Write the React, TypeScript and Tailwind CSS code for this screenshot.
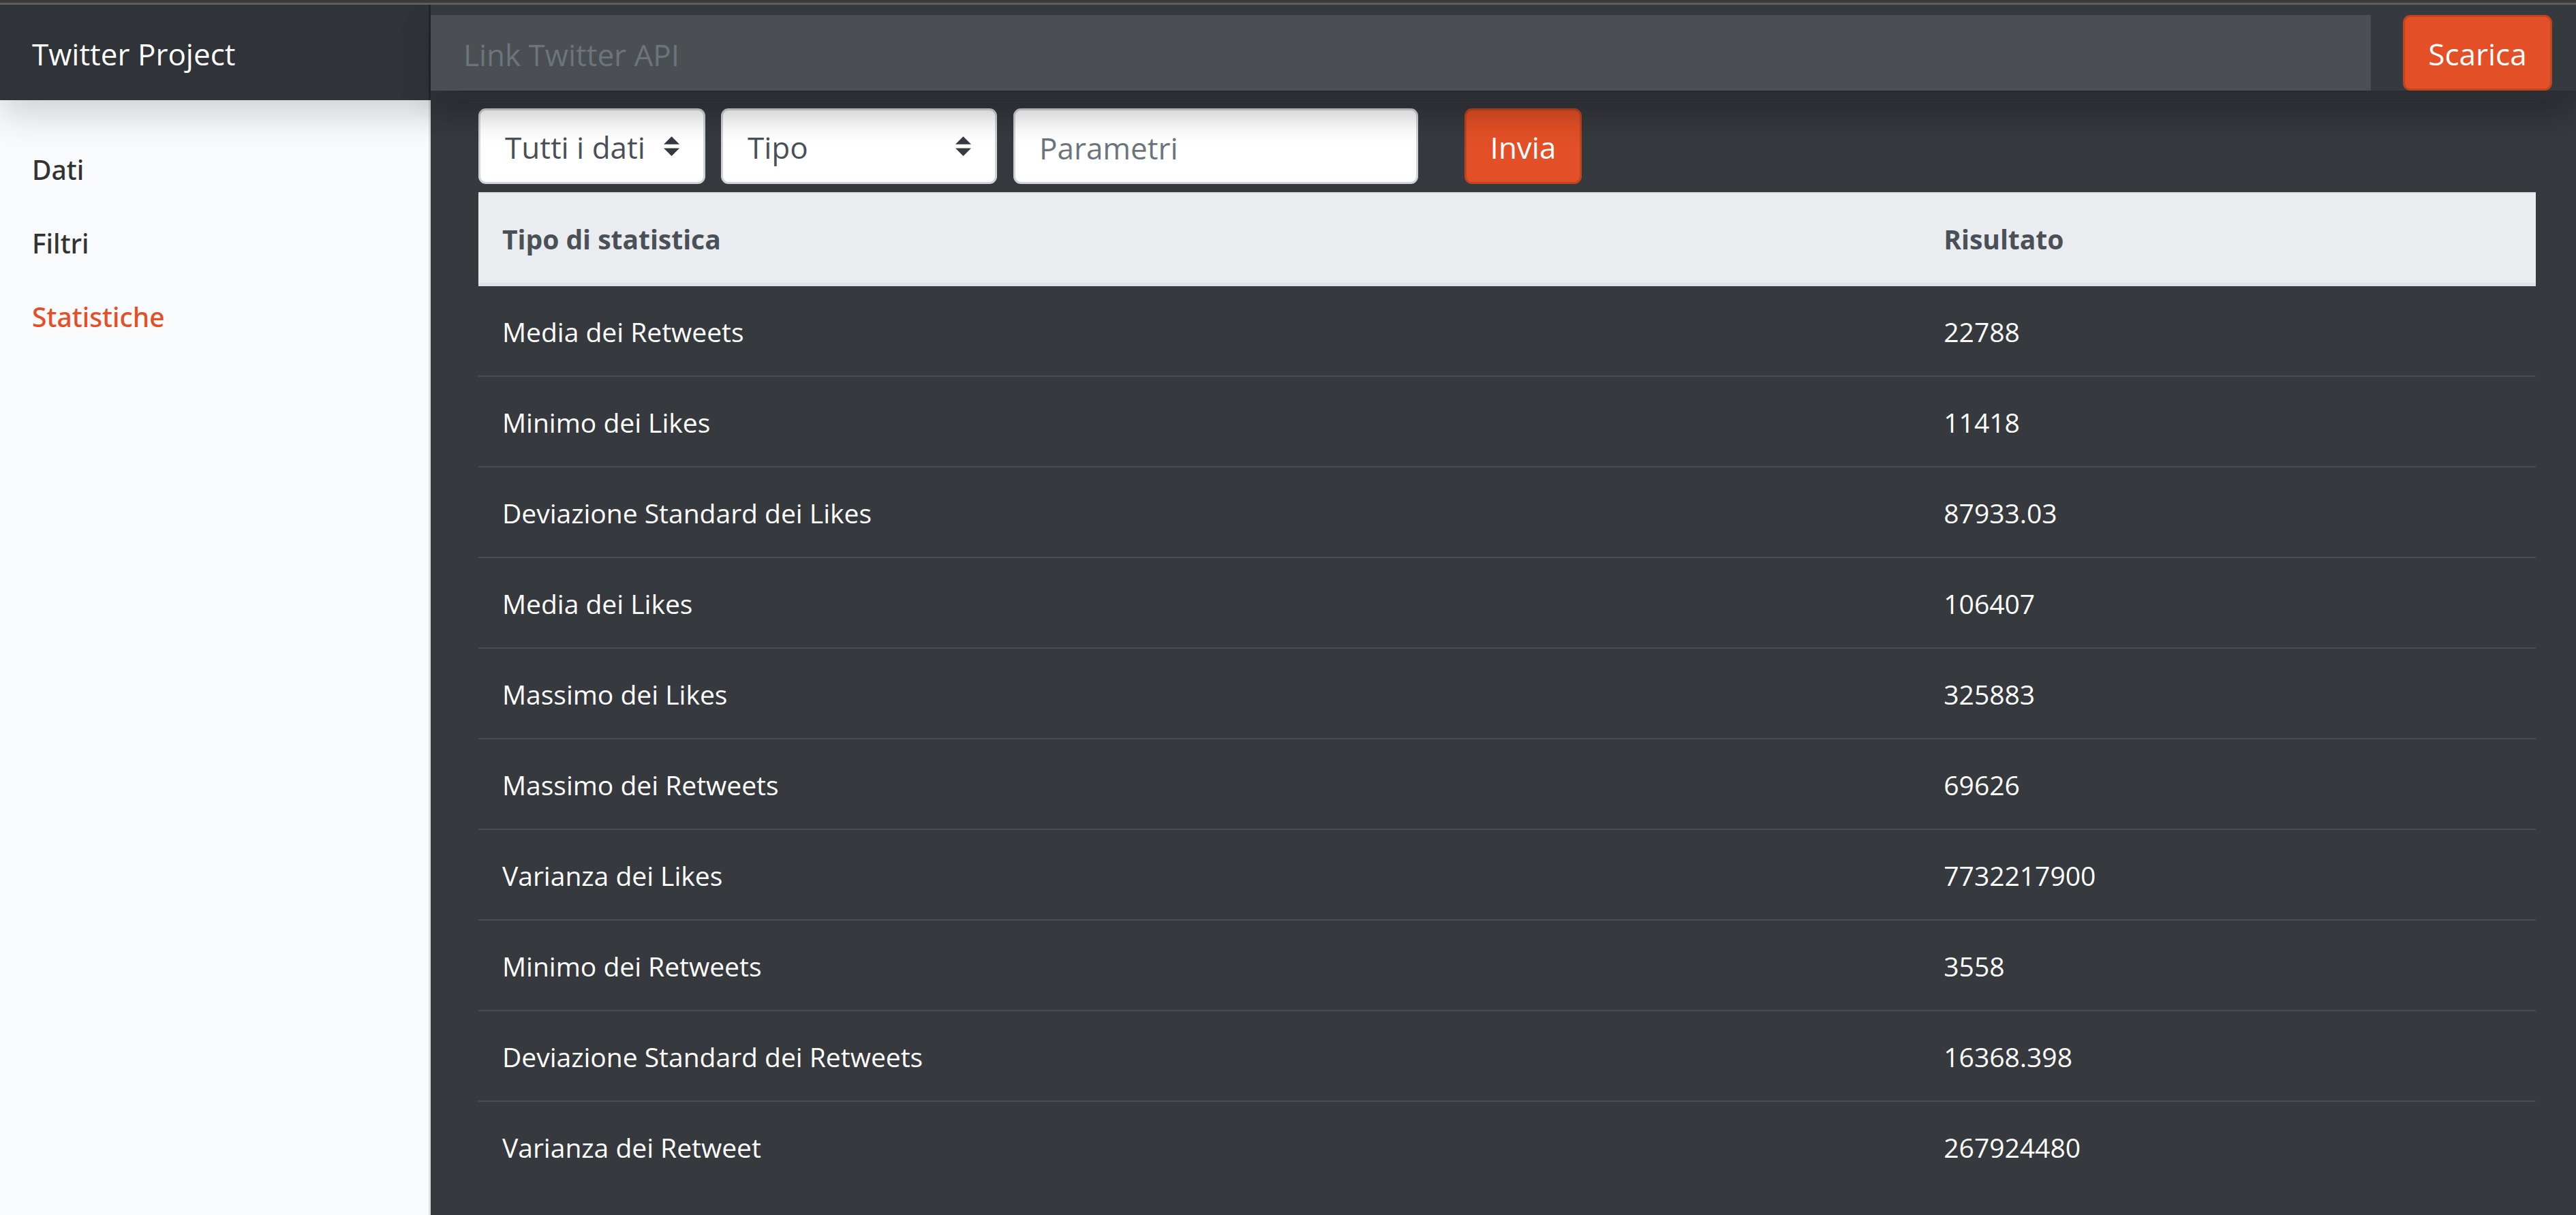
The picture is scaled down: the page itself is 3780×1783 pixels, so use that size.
import React from "react";

const links = [
  { label: "Dati", active: false },
  { label: "Filtri", active: false },
  { label: "Statistiche", active: true },
];

const stats: [string, string][] = [
  ["Media dei Retweets", "22788"],
  ["Minimo dei Likes", "11418"],
  ["Deviazione Standard dei Likes", "87933.03"],
  ["Media dei Likes", "106407"],
  ["Massimo dei Likes", "325883"],
  ["Massimo dei Retweets", "69626"],
  ["Varianza dei Likes", "7732217900"],
  ["Minimo dei Retweets", "3558"],
  ["Deviazione Standard dei Retweets", "16368.398"],
  ["Varianza dei Retweet", "267924480"],
];

function OrangeButton({ children, className }: { children: React.ReactNode; className: string }) {
  return (
    <button
      type="submit"
      className={`h-[111px] shrink-0 cursor-pointer rounded-[11px] border-[3px] border-[#bf4420] bg-[#e35027] pt-[3px] text-[44px] leading-[66px] text-white ${className}`}
    >
      {children}
    </button>
  );
}

function Select({ label, options, className }: { label: string; options: string[]; className: string }) {
  return (
    <div className={`relative shrink-0 ${className}`}>
      <select
        aria-label={label}
        className="h-[111px] w-full appearance-none rounded-[11px] border-[3px] border-[#ced4da] bg-white pt-[3px] pr-16 pl-[36px] text-[44px] leading-[66px] text-[#495057]"
      >
        {options.map((o) => (
          <option key={o}>{o}</option>
        ))}
      </select>
      <svg
        viewBox="0 0 4 5"
        className="pointer-events-none absolute inset-y-0 right-[38px] my-auto h-[29px] w-[23px]"
        aria-hidden="true"
      >
        <path fill="#343a40" d="M2 0L0 2h4zm0 5L0 3h4z" />
      </svg>
    </div>
  );
}

export default function App() {
  return (
    <div className="flex min-h-screen flex-col bg-[#36393e] font-['Open_Sans',sans-serif]">
      <div className="relative z-20 h-[7px] shrink-0 border-b-[3px] border-[#5e5e5e] bg-[#3a3a3a]" />

      <nav className="relative z-10 flex h-[140px] shrink-0 bg-[#303338] shadow-[0_24px_48px_rgba(0,0,0,0.15)]">
        <a
          href="#"
          className="w-[632px] shrink-0 pt-[39px] pl-[47px] text-[44px] leading-[66px] text-white shadow-[inset_-3px_0_0_rgba(0,0,0,0.25)]"
        >
          Twitter Project
        </a>
        <form
          className="flex h-[126px] min-w-0 grow items-end bg-[#36393e] pr-[35px] shadow-[0_24px_48px_rgba(0,0,0,0.15)]"
          onSubmit={(e) => e.preventDefault()}
        >
          <input
            type="text"
            aria-label="Link Twitter API"
            placeholder="Link Twitter API"
            className="h-[111px] min-w-0 grow bg-[#4b4e52] px-12 pt-[5px] text-[44px] leading-[66px] text-white placeholder:text-[#6c757d]"
          />
          <OrangeButton className="ml-[47px] w-[219px]">Scarica</OrangeButton>
        </form>
      </nav>

      <div className="flex grow">
        <aside className="w-[632px] shrink-0 bg-[#f8fafc] pt-12 shadow-[inset_-3px_0_0_rgba(0,0,0,0.1)]">
          <ul>
            {links.map((l) => (
              <li key={l.label}>
                <a
                  href="#"
                  className={`block px-[47px] py-6 font-['Noto_Sans',sans-serif] text-[39px] leading-[60px] font-medium ${l.active ? "text-[#e35027]" : "text-[#333333]"}`}
                >
                  {l.label}
                </a>
              </li>
            ))}
          </ul>
        </aside>

        <main className="min-w-0 grow pt-3 pr-[59px] pl-[70px]">
          <form className="mb-3 flex" onSubmit={(e) => e.preventDefault()}>
            <Select label="Dati" options={["Tutti i dati"]} className="w-[333px]" />
            <Select label="Tipo" options={["Tipo"]} className="ml-[23px] w-[405px]" />
            <input
              type="text"
              aria-label="Parametri"
              placeholder="Parametri"
              className="ml-6 h-[111px] w-[594px] rounded-[11px] border-[3px] border-[#ced4da] bg-white px-[35px] pt-[4px] text-[44px] leading-[66px] text-[#495057] placeholder:text-[#6c757d]"
            />
            <OrangeButton className="ml-[68px] w-[172px]">Invia</OrangeButton>
          </form>

          <table className="w-full table-fixed border-separate border-spacing-0 text-left text-[39px] leading-[59px] text-white">
            <thead className="bg-[#ebecef] text-[#495057]">
              <tr>
                <th scope="col" className="w-[70%] border-t-2 border-b-[5px] border-[#dee2e6] px-[35px] pt-[37px] pb-[35px] font-bold">
                  Tipo di statistica
                </th>
                <th scope="col" className="border-t-2 border-b-[5px] border-[#dee2e6] px-[37px] pt-[37px] pb-[35px] font-bold">
                  Risultato
                </th>
              </tr>
            </thead>
            <tbody>
              {stats.map(([name, value], i) => {
                const line = i > 0 ? "border-t-2 border-[#454d55]" : "";
                return (
                  <tr key={name}>
                    <td className={`px-[35px] pt-[37px] pb-[35px] ${line}`}>{name}</td>
                    <td className={`px-[37px] pt-[37px] pb-[35px] ${line}`}>{value}</td>
                  </tr>
                );
              })}
            </tbody>
          </table>
        </main>
      </div>
    </div>
  );
}
